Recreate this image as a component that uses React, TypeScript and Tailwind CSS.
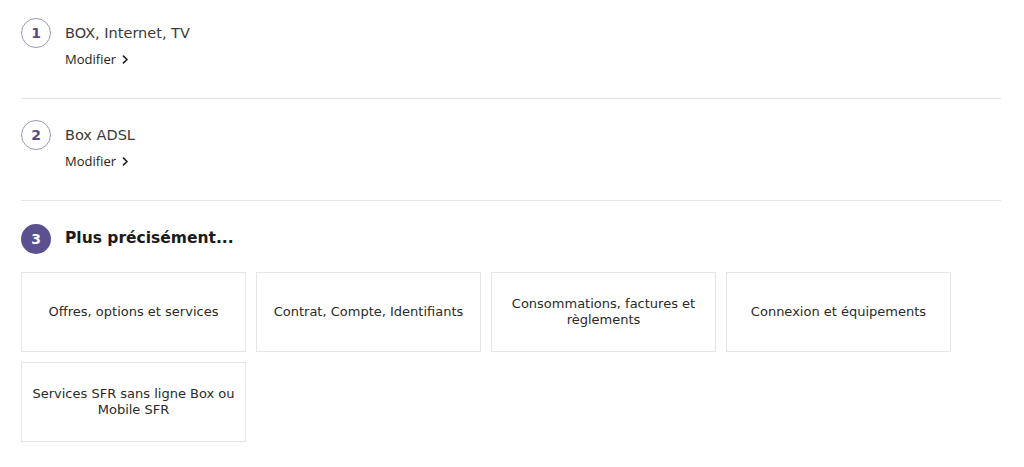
import React from 'react';

const steps = [
  { n: '1', label: 'BOX, Internet, TV', pad: 'pt-[18px] h-[99px]' },
  { n: '2', label: 'Box ADSL', pad: 'pt-[21px] h-[102px]' },
];

const cards = [
  'Offres, options et services',
  'Contrat, Compte, Identifiants',
  'Consommations, factures et règlements',
  'Connexion et équipements',
  'Services SFR sans ligne Box ou Mobile SFR',
];

const Chevron = () => (
  <svg width="7" height="9" viewBox="0 0 7 9" fill="none" className="ml-[6px]">
    <path d="M1.5 1.2 L5 4.5 L1.5 7.8" stroke="#222" strokeWidth="1.7" strokeLinecap="round" strokeLinejoin="round" />
  </svg>
);

export default function App() {
  return (
    <div className="w-[1024px] h-[467px] bg-white px-[21px] font-['DejaVu_Sans',_'Open_Sans',_sans-serif] text-[#333]">
      <div className="w-[980px]">
        {steps.map((s) => (
          <div key={s.n} className={`${s.pad} border-b border-[#e3e3e3] flex items-start gap-[14px]`}>
            <div className="w-[30px] h-[30px] rounded-full border border-[#9b97b3] flex items-center justify-center text-[14px] font-bold text-[#574c8b] leading-none">
              {s.n}
            </div>
            <div className="pt-[5px]">
              <div className="text-[14.5px] leading-[20px] text-[#3a3a3a]">{s.label}</div>
              <a className="mt-[8px] flex items-center font-['Open_Sans',_sans-serif] text-[13px] leading-[16px] font-medium text-[#222] cursor-pointer">
                Modifier
                <Chevron />
              </a>
            </div>
          </div>
        ))}

        <div className="pt-[23px]">
          <div className="flex items-center gap-[14px]">
            <div className="w-[30px] h-[30px] rounded-full bg-[#5b5090] flex items-center justify-center text-[14px] font-bold text-white leading-none">
              3
            </div>
            <div className="text-[15.5px] font-bold text-[#1a1a1a]">Plus précisément...</div>
          </div>

          <div className="mt-[18px] grid grid-cols-[repeat(4,225px)] gap-[10px]">
            {cards.map((c) => (
              <button
                key={c}
                className="h-[80px] border border-[#e6e6e6] bg-white flex items-center justify-center px-[8px] text-center text-[13px] leading-[16px] text-[#2a2a2a]"
              >
                {c}
              </button>
            ))}
          </div>
        </div>
      </div>
    </div>
  );
}
